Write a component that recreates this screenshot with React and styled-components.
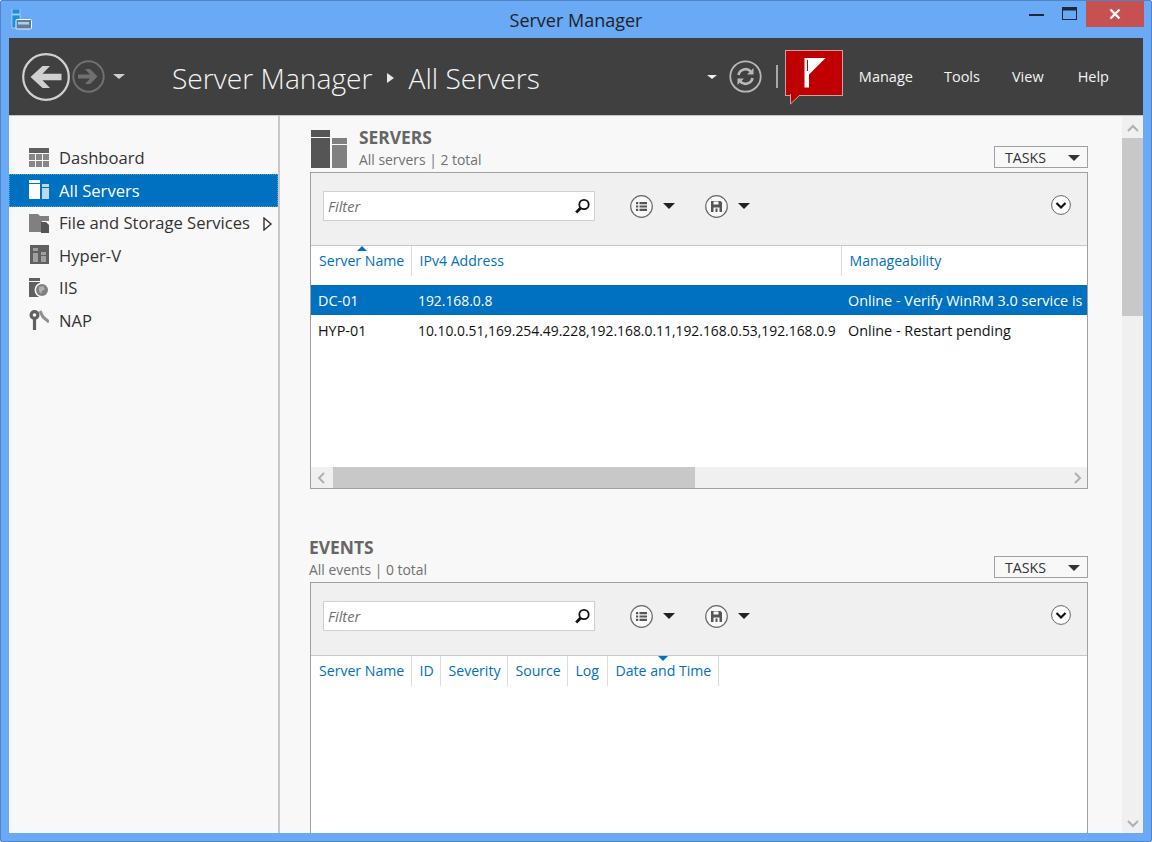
import React from "react"
import styled, { createGlobalStyle } from "styled-components"

const GlobalStyle = createGlobalStyle`
  html, body {
    margin: 0;
    padding: 0;
    background: #fff;
  }
  * {
    box-sizing: border-box;
  }
`

const fontStack = `"Open Sans", "Noto Sans", "Liberation Sans", sans-serif`
const blue = "#0070c0"

const Window = styled.div`
  width: 1152px;
  height: 842px;
  display: flex;
  flex-direction: column;
  background: #69a9f5;
  border: 1px solid #4f83c2;
  border-radius: 2px;
  padding: 0 8px 8px 8px;
  font-family: ${fontStack};
  overflow: hidden;
`

const TitleBar = styled.div`
  height: 37px;
  flex: none;
  position: relative;
  display: flex;
  align-items: center;
  justify-content: center;
  margin: 0 -8px;
  font-size: 18px;
  color: #222;
`

const AppIcon = styled.svg`
  position: absolute;
  left: 10px;
  top: 8px;
`

const WindowButtons = styled.div`
  position: absolute;
  right: 7px;
  top: 0;
  display: flex;
  align-items: flex-start;
`

const CaptionButton = styled.div`
  width: ${({ $w }) => $w}px;
  height: 26px;
  display: flex;
  align-items: center;
  justify-content: center;
  background: ${({ $close }) => ($close ? "#c75050" : "transparent")};
`

const Header = styled.header`
  height: 78px;
  flex: none;
  background: #404040;
  border-bottom: 1px solid #c8c8c8;
  display: flex;
  align-items: center;
  padding: 0 34px 0 13px;
  color: #fff;
`

const NavGroup = styled.div`
  display: flex;
  align-items: center;
  gap: 2px;
  width: 150px;
`

const Crumbs = styled.div`
  display: flex;
  align-items: center;
  gap: 13.5px;
  padding-top: 2px;
  font-size: 28.2px;
  font-weight: 300;
  color: #f4f4f4;
`

const HeaderTools = styled.div`
  margin-left: auto;
  display: flex;
  align-items: center;
`

const RefreshDivider = styled.div`
  width: 2px;
  height: 23px;
  background: #a8a8a8;
  margin: 0 7px 0 14px;
`

const FlagBox = styled.div`
  width: 58px;
  height: 46px;
  background: #c00000;
  border: 1px solid #c9a3a3;
  position: relative;
  display: flex;
  align-items: center;
  justify-content: center;
  margin-top: -7px;
`

const FlagTail = styled.svg`
  position: absolute;
  left: 4px;
  top: 43px;
`

const Menu = styled.nav`
  display: flex;
  align-items: center;
  margin-left: 16px;
  font-size: 14.5px;
  color: #f4f4f4;
`

const MenuItem = styled.span`
  margin-left: ${({ $gap }) => $gap || 0}px;
`

const Body = styled.div`
  flex: 1;
  min-height: 0;
  display: flex;
  background: #f8f8f8;
`

const Sidebar = styled.aside`
  width: 271px;
  flex: none;
  padding-top: 25.5px;
  border-right: 2px solid #c8c8c8;
`

const NavItem = styled.div`
  height: 32.5px;
  display: flex;
  align-items: center;
  gap: 10px;
  padding-left: 20px;
  font-size: 16.6px;
  color: ${({ $active }) => ($active ? "#fff" : "#333")};
  background: ${({ $active }) => ($active ? blue : "transparent")};
  outline: ${({ $active }) => ($active ? "1px dotted #5f9fd0" : "none")};
  outline-offset: -1px;
  position: relative;
`

const NavArrow = styled.svg`
  position: absolute;
  right: 5px;
  top: 10px;
`

const Main = styled.main`
  flex: 1;
  min-width: 0;
  overflow: hidden;
  padding: 12px 34px 0 30px;
`

const SectionHead = styled.div`
  height: 44px;
  display: flex;
  align-items: flex-start;
  margin-top: ${({ $gap }) => $gap || 0}px;
`

const SectionIcon = styled.svg`
  margin: 2px 12px 0 1px;
  flex: none;
`

const SectionText = styled.div`
  flex: 1;
  margin-top: -1px;
  margin-left: ${({ $flush }) => ($flush ? "-1px" : "0")};
`

const SectionTitle = styled.div`
  font-size: 17.4px;
  font-weight: 700;
  color: #666;
  line-height: 20px;
`

const SectionSub = styled.div`
  font-size: 13.9px;
  color: #707070;
  line-height: 20px;
  margin-top: 3px;
`

const TasksButton = styled.div`
  width: 94px;
  height: 22px;
  border: 1px solid #a0a0a0;
  display: flex;
  align-items: center;
  justify-content: space-between;
  padding: 1px 7px 0 10px;
  margin-top: 18px;
  font-size: 14.2px;
  color: #333;
`

const Caret = styled.span`
  display: inline-block;
  width: 0;
  height: 0;
  margin-left: ${({ $ml }) => $ml || 0}px;
  margin-right: ${({ $mr }) => $mr || 0}px;
  border-left: ${({ $size }) => $size || 6.5}px solid transparent;
  border-right: ${({ $size }) => $size || 6.5}px solid transparent;
  border-top: ${({ $size }) => ($size ? $size - 1 : 6)}px solid ${({ $color }) => $color || "#222"};
`

const Panel = styled.section`
  border: 1px solid #a0a0a0;
  height: ${({ $h }) => $h}px;
  background: #fff;
  display: flex;
  flex-direction: column;
  overflow: hidden;
`

const Toolbar = styled.div`
  height: 73px;
  flex: none;
  background: #f0f0f0;
  border-bottom: 1px solid #c8c8c8;
  display: flex;
  align-items: flex-start;
  padding: 18px 16px 0 12px;
`

const FilterBox = styled.div`
  width: 272px;
  height: 30px;
  background: #fff;
  border: 1px solid #d0d0d0;
  display: flex;
  align-items: center;
  justify-content: space-between;
  padding: 0 3px 0 4px;
  margin-right: 35px;
  font-size: 14.6px;
  font-style: italic;
  color: #707070;
`

const ToolGroup = styled.div`
  width: 75px;
  height: 30px;
  display: flex;
  align-items: center;
  gap: 9.5px;
`

const ExpandButton = styled.svg`
  margin: 4px 0 0 auto;
`

const TableScroll = styled.div`
  flex: 1;
  min-height: 0;
  display: flex;
  flex-direction: column;
`

const HeadRow = styled.div`
  height: 39px;
  flex: none;
  display: flex;
`

const HeadCell = styled.div`
  width: ${({ $w }) => $w}px;
  flex: none;
  height: 30px;
  padding: 4px 0 0 ${({ $pad }) => $pad || 7.5}px;
  font-size: 14.1px;
  line-height: 22px;
  color: ${blue};
  position: relative;
  border-right: ${({ $open }) => ($open ? "none" : "1px solid #dcdcdc")};
  white-space: nowrap;
`

const SortMark = styled.span`
  position: absolute;
  left: ${({ $x }) => $x}px;
  top: 0;
  width: 0;
  height: 0;
  border-left: 5px solid transparent;
  border-right: 5px solid transparent;
  ${({ $down }) =>
    $down ? `border-top: 5px solid ${blue};` : `border-bottom: 5px solid ${blue};`}
`

const Row = styled.div`
  height: ${({ $h }) => $h}px;
  flex: none;
  display: flex;
  align-items: center;
  color: ${({ $selected }) => ($selected ? "#fff" : "#111")};
  background: ${({ $selected }) => ($selected ? blue : "transparent")};
  white-space: nowrap;
  overflow: hidden;
`

const Cell = styled.div`
  width: ${({ $w }) => $w}px;
  flex: none;
  padding-left: 7px;
  overflow: hidden;
  font-size: ${({ $size }) => $size || 14.4}px;
`

const HScroll = styled.div`
  margin-top: auto;
  height: 21px;
  flex: none;
  background: #f0f0f0;
  display: flex;
  align-items: center;
`

const HThumb = styled.div`
  width: 362px;
  height: 100%;
  background: #c8c8c8;
`

const ScrollEnd = styled.svg`
  flex: none;
  margin: ${({ $right }) => ($right ? "0 4px 0 auto" : "0 6px 0 6px")};
`

const VScroll = styled.div`
  width: 21px;
  flex: none;
  background: #f0f0f0;
  display: flex;
  flex-direction: column;
  align-items: center;
`

const VThumb = styled.div`
  width: 100%;
  height: 178px;
  background: #c8c8c8;
`

const VArrow = styled.svg`
  flex: none;
  margin: ${({ $down }) => ($down ? "auto 0 5px" : "8px 0 6px")};
`

const navIcons = {
  dashboard: (
    <>
      <rect x="0" y="0" width="20" height="5" fill="#606060" />
      <path d="M0 6h6v6H0zM7 6h6v6H7zM14 6h6v6h-6zM0 13h6v6H0zM7 13h6v6H7zM14 13h6v6h-6z" fill="#868686" />
    </>
  ),
  servers: (color, light) => (
    <>
      <rect x="0" y="0" width="11" height="3" fill={color} />
      <rect x="0" y="4" width="11" height="15" fill={color} />
      <rect x="13" y="4" width="7" height="3" fill={light} />
      <rect x="13" y="8" width="7" height="11" fill={light} />
    </>
  ),
  storage: (
    <>
      <path d="M0 1h9l2 2h9v5h-7v11H0z" fill="#808080" />
      <path d="M12 9h5l3 3v8h-8z" fill="#555" />
    </>
  ),
  hyperv: (
    <>
      <rect x="1" y="0" width="19" height="19" fill="#606060" />
      <rect x="4" y="3" width="5" height="3" fill="#a0a0a0" />
      <rect x="4" y="8" width="5" height="9" fill="#a0a0a0" />
      <rect x="12" y="7" width="5" height="3" fill="#a0a0a0" />
      <rect x="12" y="11" width="5" height="6" fill="#a0a0a0" />
    </>
  ),
  iis: (
    <>
      <rect x="0" y="0" width="11" height="3" fill="#606060" />
      <rect x="0" y="4" width="11" height="15" fill="#606060" />
      <circle cx="13" cy="12" r="7.5" fill="#f8f8f8" />
      <circle cx="13" cy="12" r="6" fill="#808080" />
      <path d="M10 9l4-1 2 3-3 2-1 3-2-3z" fill="#b0b0b0" />
    </>
  ),
  nap: (
    <>
      <circle cx="5.5" cy="5" r="3.4" fill="none" stroke="#606060" strokeWidth="3.2" />
      <path d="M5.5 9v11" stroke="#606060" strokeWidth="3.2" />
      <path d="M11 1l3 6 6 5" fill="none" stroke="#909090" strokeWidth="3" />
    </>
  ),
}

const navItems = [
  { label: "Dashboard", icon: navIcons.dashboard },
  { label: "All Servers", icon: navIcons.servers("#fff", "#bcd8ee"), active: true },
  { label: "File and Storage Services", icon: navIcons.storage, more: true },
  { label: "Hyper-V", icon: navIcons.hyperv },
  { label: "IIS", icon: navIcons.iis },
  { label: "NAP", icon: navIcons.nap },
]

const BackArrow = () => (
  <svg width="48" height="48" viewBox="0 0 48 48">
    <circle cx="24" cy="24" r="22.8" fill="none" stroke="#d0d0d0" strokeWidth="2.2" />
    <path d="M39.5 20.7v6.6H20.5l7.5 7.7h-7.5L8.5 24l12-11H28l-7.5 7.7z" fill="#d0d0d0" />
  </svg>
)

const ForwardArrow = () => (
  <svg width="33" height="33" viewBox="0 0 33 33">
    <circle cx="16.5" cy="16.5" r="15.2" fill="none" stroke="#707070" strokeWidth="2" />
    <path d="M6 14.5v4h12l-5 5.5h5l7.5-7.5L18 9h-5l5 5.5z" fill="#707070" />
  </svg>
)

const RefreshIcon = () => (
  <svg width="33" height="33" viewBox="0 0 33 33">
    <circle cx="16.5" cy="16.5" r="15.2" fill="none" stroke="#b8b8b8" strokeWidth="1.8" />
    <path d="M9.5 15a7.2 7.2 0 0 1 12.4-3.4" fill="none" stroke="#b8b8b8" strokeWidth="2.6" />
    <path d="M23.5 18a7.2 7.2 0 0 1-12.4 3.4" fill="none" stroke="#b8b8b8" strokeWidth="2.6" />
    <path d="M24.5 8v6.5H18zM8.5 25v-6.5H15z" fill="#b8b8b8" />
  </svg>
)

const ListIcon = () => (
  <svg width="23" height="23" viewBox="0 0 23 23">
    <circle cx="11.5" cy="11.5" r="10.8" fill="#f8f8f8" stroke="#6a6a6a" strokeWidth="1.2" />
    <path d="M6 7h2.2v2.2H6zM6 10.4h2.2v2.2H6zM6 13.8h2.2V16H6zM9.5 7H17v2.2H9.5zM9.5 10.4H17v2.2H9.5zM9.5 13.8H17V16H9.5z" fill="#555" />
  </svg>
)

const SaveIcon = () => (
  <svg width="23" height="23" viewBox="0 0 23 23">
    <circle cx="11.5" cy="11.5" r="10.8" fill="#f8f8f8" stroke="#6a6a6a" strokeWidth="1.2" />
    <path d="M6 6h9.5L17 7.5V17H6z" fill="#555" />
    <path d="M8.5 6.5h5v3h-5zM8.5 12.5h6V17h-6z" fill="#f8f8f8" />
    <path d="M10.5 13.5h2V17h-2z" fill="#555" />
  </svg>
)

const SearchIcon = () => (
  <svg width="18" height="18" viewBox="0 0 18 18">
    <circle cx="11" cy="7.5" r="4.7" fill="none" stroke="#111" strokeWidth="1.8" />
    <path d="M7.6 11L3.2 15.4" stroke="#111" strokeWidth="2.8" />
  </svg>
)

const Chevron = ({ dir, color = "#b0b0b0" }) => {
  const paths = {
    left: "M7 1L2 6l5 5",
    right: "M2 1l5 5-5 5",
    up: "M1 7l5-5 5 5",
    down: "M1 2l5 5 5-5",
  }
  return <path d={paths[dir]} fill="none" stroke={color} strokeWidth="2" />
}

const TableToolbar = () => (
  <Toolbar>
    <FilterBox>
      Filter
      <SearchIcon />
    </FilterBox>
    <ToolGroup>
      <ListIcon />
      <Caret />
    </ToolGroup>
    <ToolGroup>
      <SaveIcon />
      <Caret />
    </ToolGroup>
    <ExpandButton width="20" height="20" viewBox="0 0 20 20">
      <circle cx="10" cy="10" r="9.4" fill="#fff" stroke="#666" strokeWidth="1" />
      <path d="M5.5 8l4.5 4.5L14.5 8" fill="none" stroke="#111" strokeWidth="2.2" />
    </ExpandButton>
  </Toolbar>
)

const Section = ({ gap, icon, title, sub, children, height }) => (
  <>
    <SectionHead $gap={gap}>
      {icon}
      <SectionText $flush={!icon}>
        <SectionTitle>{title}</SectionTitle>
        <SectionSub>{sub}</SectionSub>
      </SectionText>
      <TasksButton>
        TASKS
        <Caret $color="#333" />
      </TasksButton>
    </SectionHead>
    <Panel $h={height}>
      <TableToolbar />
      <TableScroll>{children}</TableScroll>
    </Panel>
  </>
)

const eventColumns = [
  ["Server Name", 101],
  ["ID", 29],
  ["Severity", 67],
  ["Source", 60],
  ["Log", 40],
  ["Date and Time", 111],
]

export default function App() {
  return (
    <>
      <GlobalStyle />
      <Window>
        <TitleBar>
          <AppIcon width="22" height="22" viewBox="0 0 22 22">
            <rect x="1" y="0" width="8" height="5" fill="#1e8fdc" stroke="#cfe6fa" strokeWidth="0.6" />
            <rect x="1" y="6" width="8" height="13" fill="#1e8fdc" stroke="#cfe6fa" strokeWidth="0.6" />
            <rect x="5" y="10.5" width="15.5" height="9.5" rx="1" fill="#5c7f9c" stroke="#eef5fb" />
            <rect x="7" y="13" width="11" height="2.5" fill="#b9cbd9" />
          </AppIcon>
          Server Manager
          <WindowButtons>
            <CaptionButton $w={33}>
              <svg width="15" height="3" viewBox="0 0 15 3">
                <rect width="15" height="2" y="1" fill="#1a2a3a" />
              </svg>
            </CaptionButton>
            <CaptionButton $w={33}>
              <svg width="16" height="14" viewBox="0 0 16 14">
                <rect x="0.5" y="0.5" width="14" height="12" fill="none" stroke="#1a2a3a" />
                <rect x="0.5" y="0.5" width="14" height="3" fill="#1a2a3a" />
              </svg>
            </CaptionButton>
            <CaptionButton $w={58} $close>
              <svg width="12" height="12" viewBox="0 0 12 12">
                <path d="M1.5 1.5l9 9M10.5 1.5l-9 9" stroke="#fff" strokeWidth="2.4" />
              </svg>
            </CaptionButton>
          </WindowButtons>
        </TitleBar>
        <Header>
          <NavGroup>
            <BackArrow />
            <ForwardArrow />
            <Caret $size={6} $color="#d0d0d0" $ml={6} />
          </NavGroup>
          <Crumbs>
            Server Manager
            <svg width="9" height="10" viewBox="0 0 9 10">
              <path d="M1 0l7 5-7 5z" fill="#e8e8e8" />
            </svg>
            All Servers
          </Crumbs>
          <HeaderTools>
            <Caret $size={5} $color="#f0f0f0" $mr={12} />
            <RefreshIcon />
            <RefreshDivider />
            <FlagBox>
              <svg width="28" height="32" viewBox="0 0 28 32">
                <rect x="4.5" y="1" width="4.5" height="29.5" fill="#fff" />
                <path d="M9 1h16.5L9 17.5z" fill="#fff" />
                <rect x="7" y="3" width="1" height="11" fill="#c00000" />
              </svg>
              <FlagTail width="15" height="11" viewBox="0 0 15 11">
                <path d="M0.5 0v10L10 1" fill="#c00000" stroke="#c9a3a3" strokeWidth="1" />
              </FlagTail>
            </FlagBox>
            <Menu>
              <MenuItem>Manage</MenuItem>
              <MenuItem $gap={31}>Tools</MenuItem>
              <MenuItem $gap={32}>View</MenuItem>
              <MenuItem $gap={34}>Help</MenuItem>
            </Menu>
          </HeaderTools>
        </Header>
        <Body>
          <Sidebar>
            {navItems.map(item => (
              <NavItem key={item.label} $active={item.active}>
                <svg width="20" height="20" viewBox="0 0 20 20">
                  {item.icon}
                </svg>
                {item.label}
                {item.more && (
                  <NavArrow width="10" height="14" viewBox="0 0 10 14">
                    <path d="M1 1l7 6-7 6z" fill="#fff" stroke="#333" strokeWidth="1.4" />
                  </NavArrow>
                )}
              </NavItem>
            ))}
          </Sidebar>
          <Main>
            <Section
              title="SERVERS"
              sub="All servers | 2 total"
              height={317}
              icon={
                <SectionIcon width="36" height="40" viewBox="0 0 36 40">
                  <rect x="0" y="0" width="19" height="7" fill="#555" />
                  <rect x="0" y="8" width="19" height="30" fill="#555" />
                  <rect x="21" y="8" width="15" height="6" fill="#808080" />
                  <rect x="21" y="15" width="15" height="23" fill="#808080" />
                </SectionIcon>
              }
            >
              <HeadRow>
                <HeadCell $w={101} $pad={8}>
                  Server Name
                  <SortMark $x={46} />
                </HeadCell>
                <HeadCell $w={430}>IPv4 Address</HeadCell>
                <HeadCell $w={240} $open>
                  Manageability
                </HeadCell>
              </HeadRow>
              <Row $selected $h={30}>
                <Cell $w={100}>DC-01</Cell>
                <Cell $w={430} $size={13.87}>192.168.0.8</Cell>
                <Cell $w={246}>Online - Verify WinRM 3.0 service is</Cell>
              </Row>
              <Row $h={31}>
                <Cell $w={100}>HYP-01</Cell>
                <Cell $w={430} $size={13.87}>10.10.0.51,169.254.49.228,192.168.0.11,192.168.0.53,192.168.0.9</Cell>
                <Cell $w={246}>Online - Restart pending</Cell>
              </Row>
              <HScroll>
                <ScrollEnd width="10" height="12" viewBox="0 0 10 12">
                  <Chevron dir="left" />
                </ScrollEnd>
                <HThumb />
                <ScrollEnd $right width="10" height="12" viewBox="0 0 10 12">
                  <Chevron dir="right" />
                </ScrollEnd>
              </HScroll>
            </Section>
            <Section gap={49} title="EVENTS" sub="All events | 0 total" height={400}>
              <HeadRow>
                {eventColumns.map(([label, w]) => (
                  <HeadCell key={label} $w={w} $pad={label === "Server Name" ? 8 : 7.5}>
                    {label}
                    {label === "Date and Time" && <SortMark $x={50} $down />}
                  </HeadCell>
                ))}
              </HeadRow>
            </Section>
          </Main>
          <VScroll>
            <VArrow width="12" height="8" viewBox="0 0 12 8">
              <Chevron dir="up" />
            </VArrow>
            <VThumb />
            <VArrow $down width="12" height="9" viewBox="0 0 12 9">
              <Chevron dir="down" />
            </VArrow>
          </VScroll>
        </Body>
      </Window>
    </>
  )
}
